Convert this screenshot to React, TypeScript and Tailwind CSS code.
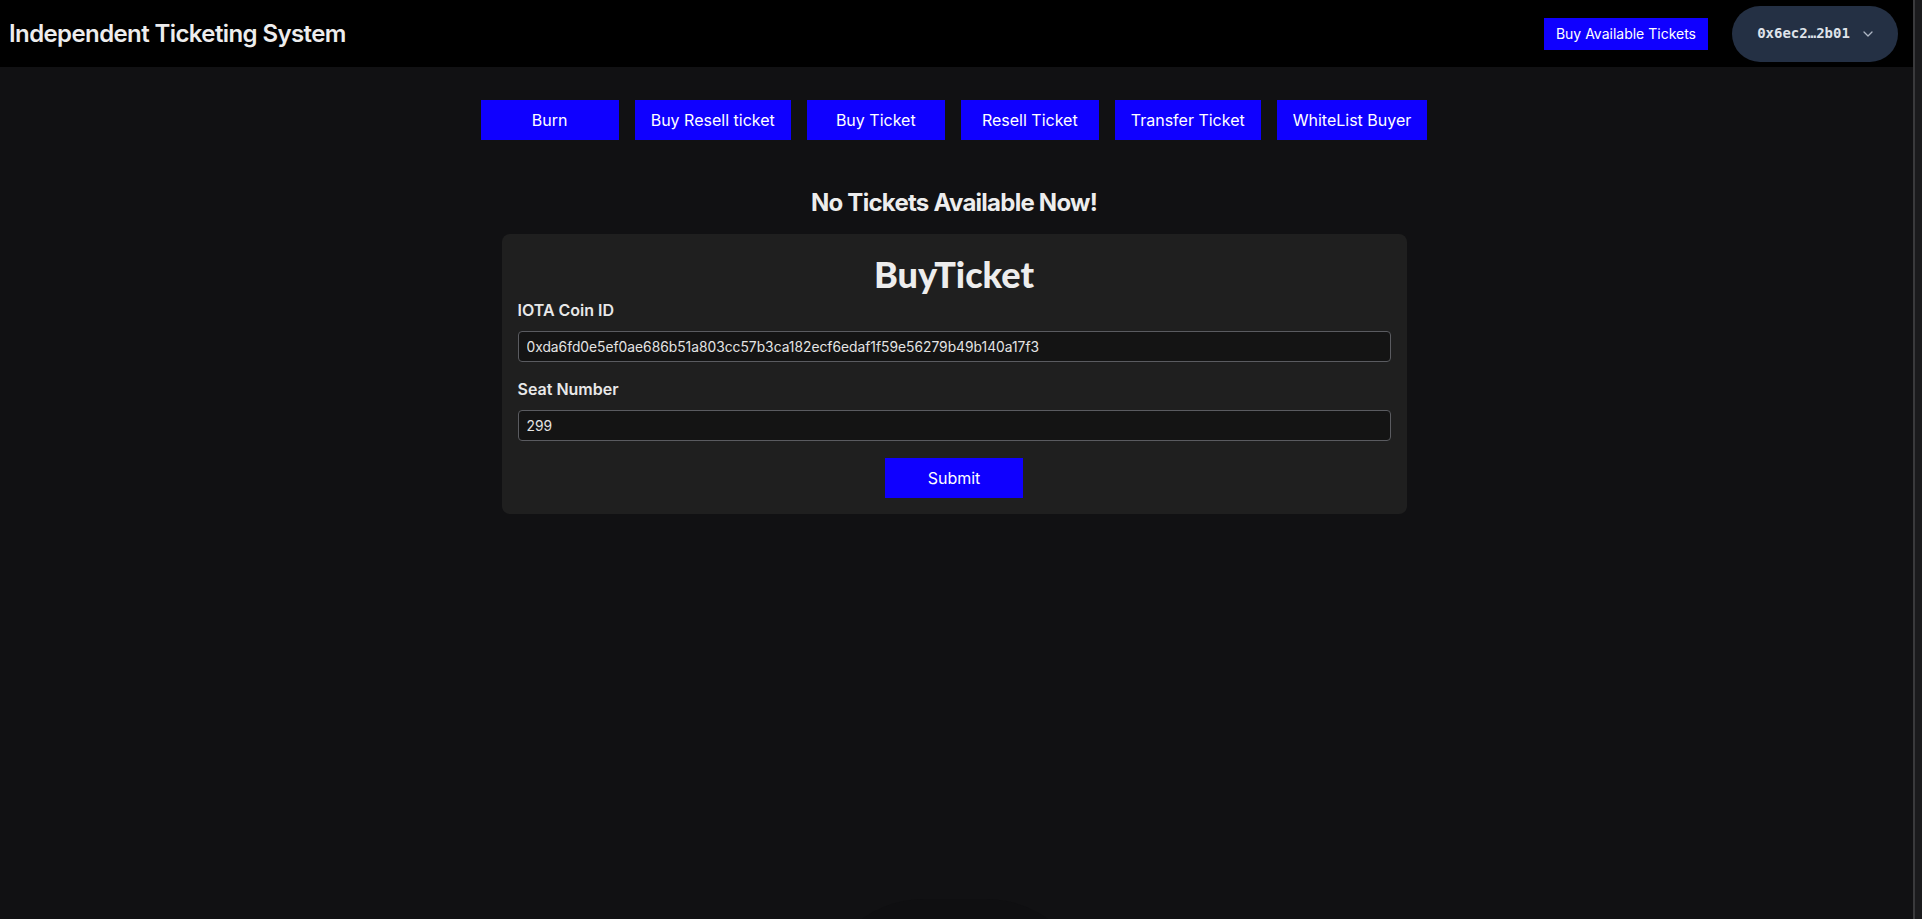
import React from "react";

const navItems = [
  "Burn",
  "Buy Resell ticket",
  "Buy Ticket",
  "Resell Ticket",
  "Transfer Ticket",
  "WhiteList Buyer",
];

export default function App() {
  return (
    <div className="flex h-[919px] w-full overflow-hidden bg-[#111113] font-['Inter','Liberation_Sans',sans-serif] text-[#ededed]">
      <div className="relative flex min-w-0 flex-1 flex-col">
        <header className="flex h-[67px] items-center justify-between bg-black pl-[9px] pr-[15px]">
          <h1 className="text-[24px] font-semibold tracking-[-0.6px] text-[#ededed]">
            Independent Ticketing System
          </h1>
          <div className="flex items-center gap-[24px]">
            <button className="h-[32px] bg-[#0f00ff] px-[12px] text-[14px] text-white">
              Buy Available Tickets
            </button>
            <button className="flex h-[56px] w-[166px] items-center justify-center gap-[13px] rounded-full bg-[#243044] text-[#dfe3ea]">
              <span className="font-['DejaVu_Sans_Mono','Liberation_Mono',monospace] text-[14px] font-bold">
                0x6ec2…2b01
              </span>
              <svg width="10" height="6" viewBox="0 0 10 6" fill="none">
                <path d="M1 1l4 4 4-4" stroke="#aeb6c4" strokeWidth="1.3" strokeLinecap="round" strokeLinejoin="round" />
              </svg>
            </button>
          </div>
        </header>

        <main className="flex flex-col items-center pr-[5px] pt-[33px]">
          <nav className="flex gap-[16px]">
            {navItems.map((item) => (
              <button
                key={item}
                className="h-[40px] min-w-[138px] bg-[#0f00ff] px-[16px] text-[16px] text-white"
              >
                {item}
              </button>
            ))}
          </nav>

          <h2 className="mt-[47px] text-[24px] leading-[32px] font-bold tracking-[-0.75px] text-[#ededed]">
            No Tickets Available Now!
          </h2>

          <section className="mt-[15px] flex w-[905px] flex-col rounded-[8px] bg-[#1f1f1f] px-[16px] pb-[16px] pt-[16px]">
            <h3 className="mt-[4px] mb-[4px] text-center font-['Lato',sans-serif] text-[36px] leading-[40px] font-black text-[#ededed]">
              BuyTicket
            </h3>
            <label className="text-[16px] leading-[24px] font-semibold text-[#e8e8e8]">
              IOTA Coin ID
            </label>
            <input
              readOnly
              value="0xda6fd0e5ef0ae686b51a803cc57b3ca182ecf6edaf1f59e56279b49b140a17f3"
              className="mt-[9px] h-[31px] w-full rounded-[4px] border border-[#5a5b60] bg-[#141414] px-[8px] text-[13.8px] text-[#e4e4e4] outline-none"
            />
            <label className="mt-[15px] text-[16px] leading-[24px] font-semibold text-[#e8e8e8]">
              Seat Number
            </label>
            <input
              readOnly
              value="299"
              className="mt-[9px] h-[31px] w-full rounded-[4px] border border-[#5a5b60] bg-[#141414] px-[8px] text-[13.8px] text-[#e4e4e4] outline-none"
            />
            <div className="mt-[17px] flex justify-center">
              <button className="h-[40px] w-[138px] bg-[#0f00ff] text-[16px] text-white">
                Submit
              </button>
            </div>
          </section>
        </main>

        <div className="pointer-events-none absolute bottom-[-200px] left-[815px] h-[220px] w-[280px] rounded-full bg-[#0f0f11]" />
      </div>
      <div className="w-[9px] border-l-2 border-[#3a3a3c] bg-[#1b1b1d]" />
    </div>
  );
}
